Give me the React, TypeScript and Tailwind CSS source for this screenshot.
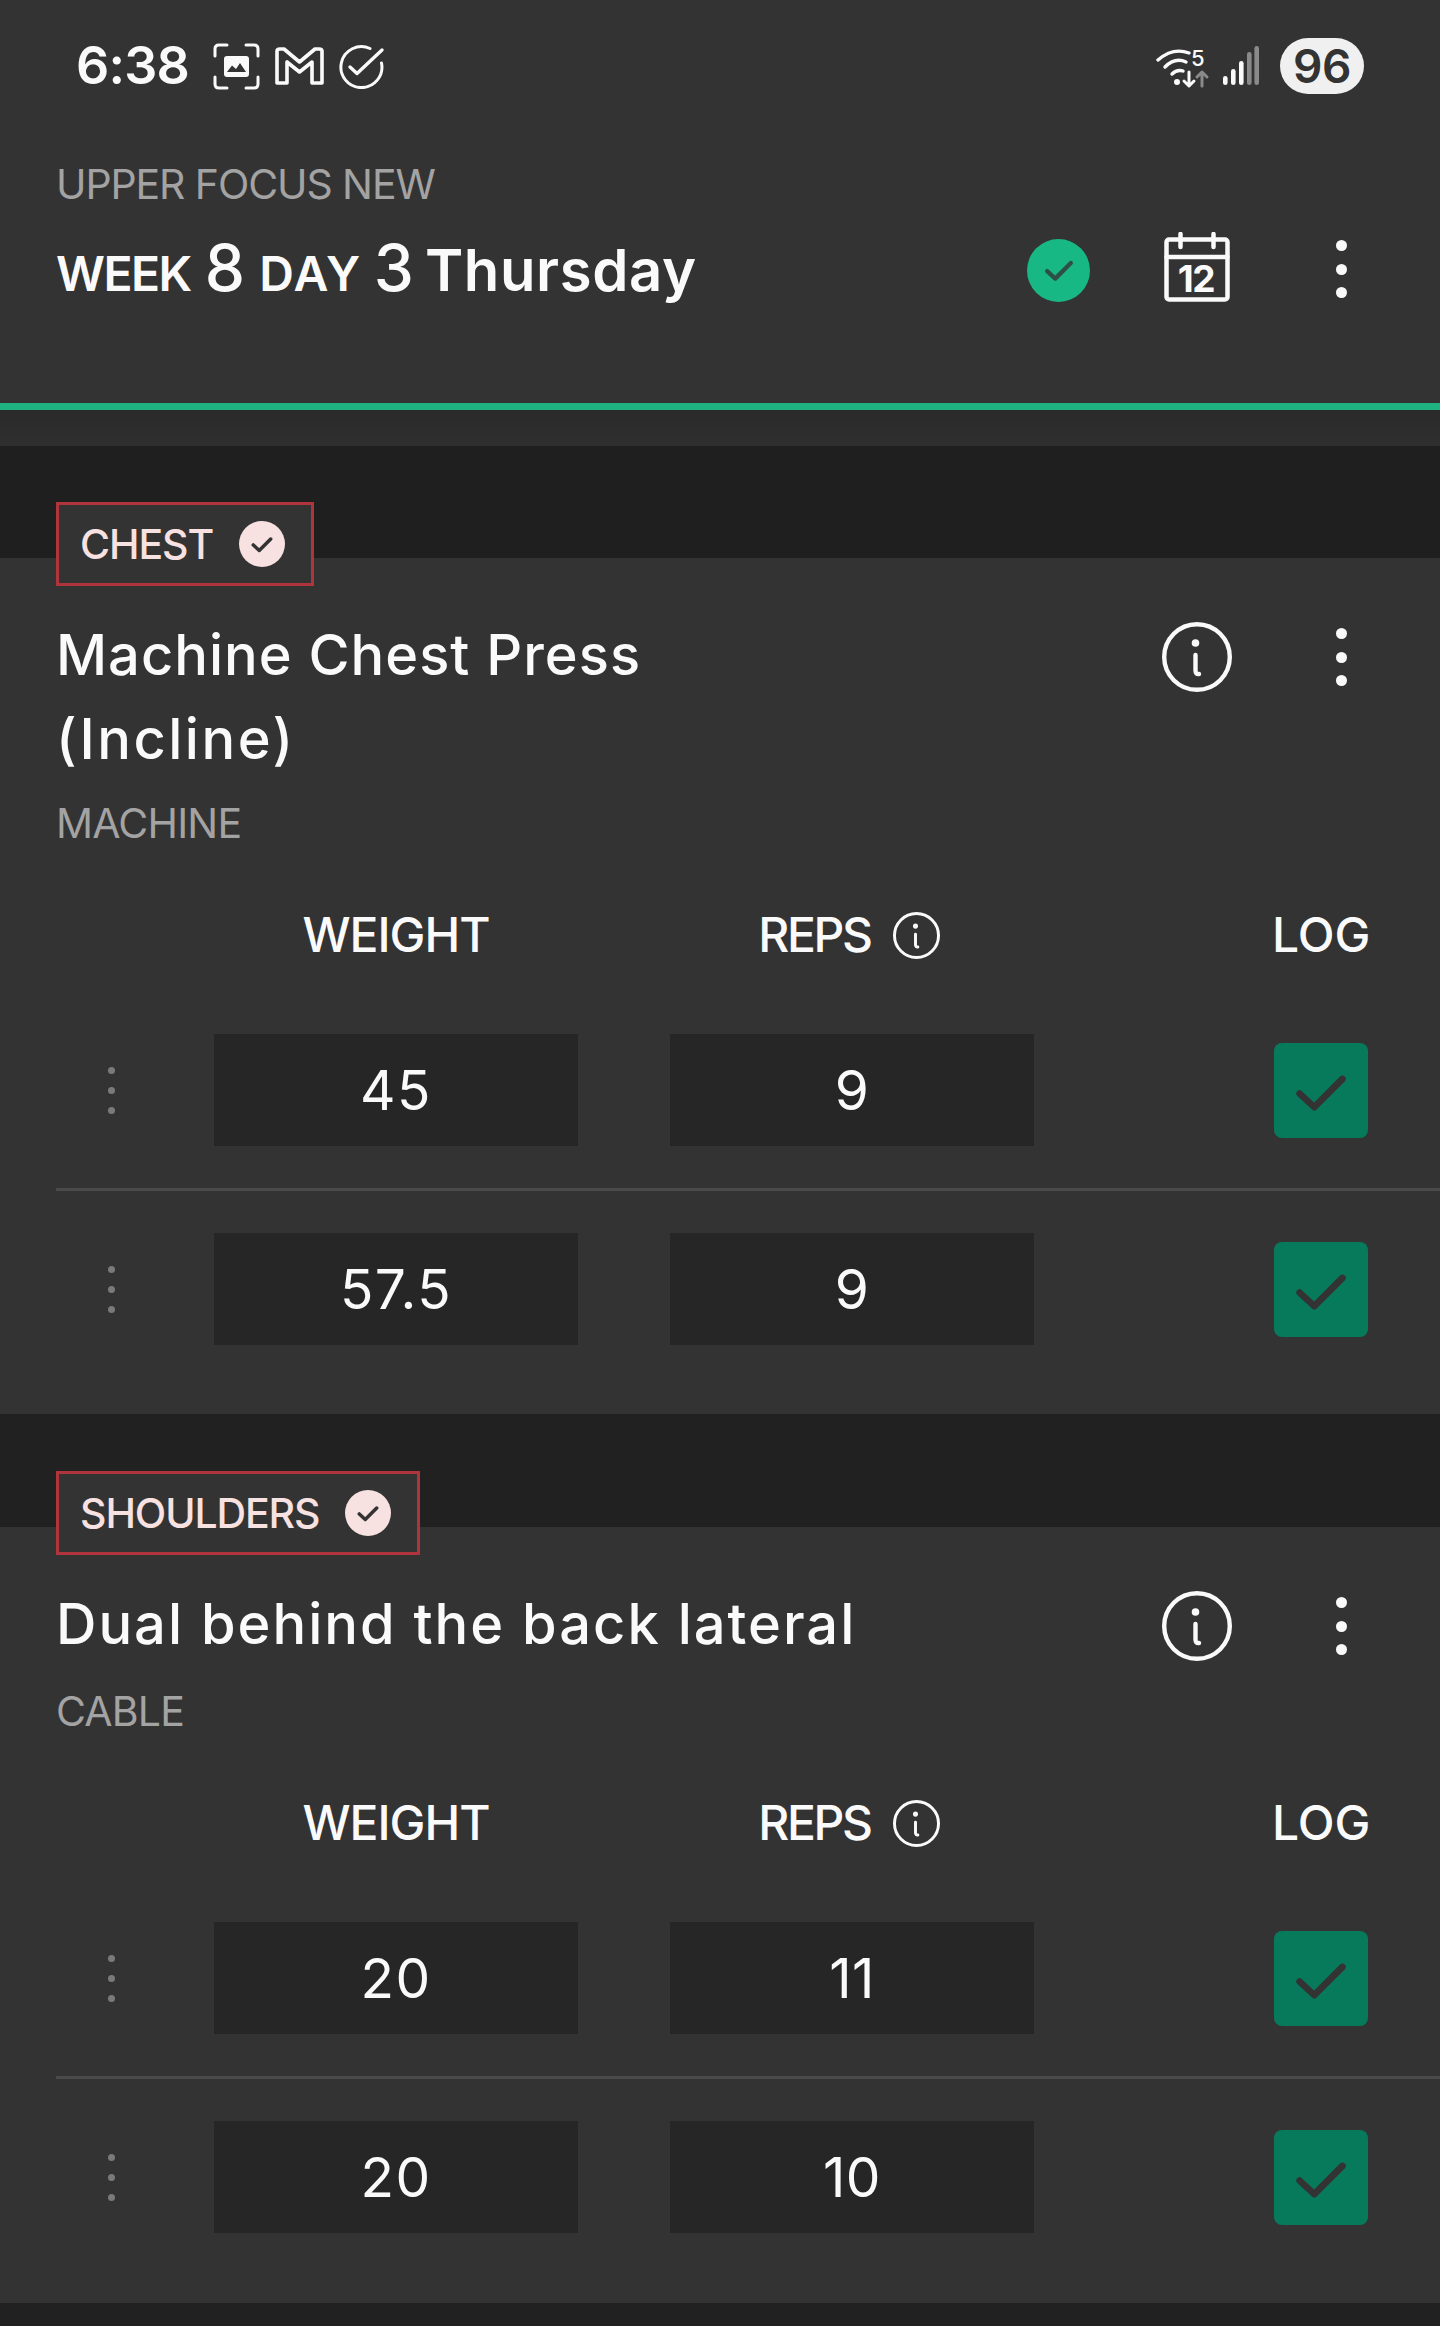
import React from "react";

const Dots = ({ cls }: { cls: string }) => (
  <div className="flex flex-col gap-[12.5px] items-center w-[11px]">
    <span className={cls} />
    <span className={cls} />
    <span className={cls} />
  </div>
);

const Check = ({ w, h, color, sw }: { w: number; h: number; color: string; sw: number }) => (
  <svg width={w} height={h} viewBox="0 0 24 18" fill="none" stroke={color} strokeWidth={sw} strokeLinecap="round" strokeLinejoin="round">
    <path d="M2.5 9.5 L9 15.5 L21.5 3" />
  </svg>
);

const Info = ({ size, sw }: { size: number; sw: number }) => (
  <svg width={size} height={size} viewBox="0 0 70 70" fill="none" stroke="#fafafa" strokeWidth={sw} strokeLinecap="round">
    <circle cx="35" cy="35" r={35 - sw / 2} />
    <circle cx="33.5" cy="21" r="3.8" fill="#fafafa" stroke="none" />
    <path d="M33.5 33 V48.5 Q33.5 52.5 37 52" />
  </svg>
);

const StatusLeftIcons = () => (
  <div className="flex items-center ml-[24px] gap-[15px]">
    <svg width="47" height="47" viewBox="0 0 47 47" fill="none" stroke="#fafafa" strokeWidth="3" strokeLinecap="round">
      <path d="M2 13 V6 Q2 2 6 2 H14 M33 2 H41 Q45 2 45 6 V13 M2 34 V41 Q2 45 6 45 H14 M33 45 H41 Q45 45 45 41 V34" />
      <rect x="11" y="13" width="25" height="21" rx="3" fill="#fafafa" stroke="none" />
      <path d="M14 29 L19 22.5 L23 26 L27 20 L33 29 Z" fill="#333333" stroke="none" />
    </svg>
    <svg width="49" height="38" viewBox="0 0 49 38" fill="none" stroke="#fafafa" strokeWidth="3.6" strokeLinejoin="round">
      <path d="M2 4 Q2 2 5 2 H9 L24.5 15 L40 2 H44 Q47 2 47 4 V36 H37 V15 L24.5 25 L12 15 V36 H2 Z" />
    </svg>
    <svg width="46" height="45" viewBox="0 0 46 45" fill="none" stroke="#fafafa" strokeWidth="3" strokeLinecap="round" strokeLinejoin="round">
      <path d="M31 4.5 A20.5 20.5 0 1 0 42.5 19" />
      <path d="M11 23 L18 29.5 L43 6" strokeWidth="3.4" />
    </svg>
  </div>
);

const StatusRightIcons = () => (
  <div className="flex items-center">
    <svg width="56" height="52" viewBox="0 -8 56 52" fill="none" className="mr-[11px]">
      <g stroke="#fafafa" strokeWidth="3.4" strokeLinecap="round">
        <path d="M2 12 Q17 -1 33 5" />
        <path d="M9 19 Q19 9 30 14" />
        <path d="M16 26 Q21 21 27 23" />
      </g>
      <circle cx="21" cy="34" r="3" fill="#fafafa" />
      <path d="M33 24 V37 M28 33 L33 38 L38 33" stroke="#fafafa" strokeWidth="3" strokeLinecap="round" strokeLinejoin="round" />
      <path d="M46 38 V24 M41 29 L46 24 L51 29" stroke="#8a8a8a" strokeWidth="3" strokeLinecap="round" strokeLinejoin="round" />
      <text x="35" y="18" fill="#fafafa" fontFamily="Inter, sans-serif" fontSize="22" fontWeight="500">5</text>
    </svg>
    <svg width="36" height="40" viewBox="0 0 36 40" className="mr-[21px]">
      <rect x="0" y="30" width="4.6" height="9" rx="2.3" fill="#fafafa" />
      <rect x="8" y="23" width="4.6" height="16" rx="2.3" fill="#fafafa" />
      <rect x="16" y="15" width="4.6" height="24" rx="2.3" fill="#fafafa" />
      <rect x="24" y="6" width="4.6" height="33" rx="2.3" fill="#8a8a8a" />
      <rect x="31.4" y="0" width="4.6" height="39" rx="2.3" fill="#8a8a8a" />
    </svg>
    <div className="w-[84px] h-[56px] rounded-full bg-[#f0f0f0] flex items-center justify-center text-[#333333] text-[46px] font-semibold leading-none tracking-[-0.5px]">
      96
    </div>
  </div>
);

const Calendar = () => (
  <svg width="66" height="70" viewBox="0 0 66 70" fill="none" stroke="#fafafa" strokeWidth="4.5" strokeLinecap="round" strokeLinejoin="round">
    <rect x="2.5" y="7.5" width="61" height="60" rx="2.5" />
    <path d="M2.5 25 H63.5" />
    <path d="M16.5 2 V15 M49.5 2 V15" />
    <text x="32" y="60" fill="#fafafa" stroke="none" textAnchor="middle" fontFamily="Inter, sans-serif" fontSize="37" fontWeight="700" letterSpacing="-1.5">12</text>
  </svg>
);

const Chip = ({ label, w }: { label: string; w: string }) => (
  <div className={`relative z-10 h-[84px] ${w} -mt-[56px] border-[3px] border-[#b0343b] bg-[#333333] flex items-center justify-between pl-[21px] pr-[26px]`}>
    <span className="text-[#f7e1e1] text-[41px] font-medium leading-none tracking-[-1.1px]">{label}</span>
    <span className="w-[46px] h-[46px] rounded-full bg-[#f7e1e1] flex items-center justify-center">
      <Check w={22} h={17} color="#333333" sw={3.8} />
    </span>
  </div>
);

const Row = ({ weight, reps, divider }: { weight: string; reps: string; divider?: boolean }) => (
  <div className={divider ? "border-b-[3px] border-[#4a4a4a] pb-[42px] mb-[42px]" : ""}>
    <div className="flex items-center h-[112px]">
      <div className="w-[158px] pl-[50px]">
        <div className="flex flex-col gap-[13px] w-[11px] items-center">
          <span className="w-[7px] h-[7px] rounded-full bg-[#7a7a7a]" />
          <span className="w-[7px] h-[7px] rounded-full bg-[#7a7a7a]" />
          <span className="w-[7px] h-[7px] rounded-full bg-[#7a7a7a]" />
        </div>
      </div>
      <div className="w-[364px] h-[112px] bg-[#262626] flex items-center justify-center text-[55px] text-[#fafafa] leading-none tracking-[1.5px]">{weight}</div>
      <div className="w-[92px]" />
      <div className="w-[364px] h-[112px] bg-[#262626] flex items-center justify-center text-[55px] text-[#fafafa] leading-none tracking-[0.5px]">{reps}</div>
      <div className="w-[240px]" />
      <div className="w-[94px] h-[95px] rounded-[8px] bg-[#077a5c] flex items-center justify-center">
        <span className="mt-[4px]">
          <Check w={54} h={41} color="#333333" sw={3} />
        </span>
      </div>
    </div>
  </div>
);

const Card = ({
  title,
  kind,
  rows,
  kindCls,
}: {
  title: { text: string; cls: string }[];
  kind: string;
  rows: { w: string; r: string }[];
  kindCls: string;
}) => (
  <div className="pl-[56px]">
    <div className="flex justify-between pt-[36px] pr-[93px]">
      <div className="text-[#fafafa] text-[56px] font-medium leading-[84px] -mt-[9px]">
        {title.map((t) => (
          <div key={t.text} className={t.cls}>
            {t.text}
          </div>
        ))}
      </div>
      <div className="flex items-center h-[70px] gap-[104px]">
        <Info size={70} sw={4.4} />
        <Dots cls="w-[11px] h-[11px] rounded-full bg-[#fafafa]" />
      </div>
    </div>
    <div className={`text-[#a3a3a3] text-[41px] leading-[50px] tracking-[-0.8px] ${kindCls}`}>{kind}</div>
    <div className="flex items-center h-[60px] mt-[57px] text-[#fafafa] text-[48px] font-medium leading-none">
      <div className="w-[158px]" />
      <div className="w-[364px] text-center tracking-[-1px]">WEIGHT</div>
      <div className="w-[92px]" />
      <div className="w-[364px] flex items-center justify-center gap-[22px] pr-[6px]">
        <span className="tracking-[-2.4px]">REPS</span>
        <Info size={47} sw={4.4} />
      </div>
      <div className="w-[238px]" />
      <div>LOG</div>
    </div>
    <div className="mt-[69px]">
      {rows.map((r, i) => (
        <Row key={i} weight={r.w} reps={r.r} divider={i < rows.length - 1} />
      ))}
    </div>
  </div>
);

export default function App() {
  return (
    <div className="w-[1440px] h-[2326px] overflow-hidden bg-[#212121] font-['Inter',sans-serif]">
      <header className="h-[410px] bg-[#333333] border-b-[7px] border-[#1fb382] flex flex-col">
        <div className="flex items-center justify-between pl-[76px] pr-[76px] pt-[38px] h-[94px]">
          <div className="flex items-center">
            <span className="text-[#fafafa] text-[52px] font-semibold leading-none tracking-[-0.8px]">6:38</span>
            <StatusLeftIcons />
          </div>
          <StatusRightIcons />
        </div>
        <div className="flex justify-between pl-[56px] pr-[93px] pt-[65px]">
          <div>
            <div className="text-[#a3a3a3] text-[41px] leading-[50px] tracking-[-1.1px]">UPPER FOCUS NEW</div>
            <div className="flex items-baseline text-[#fafafa] font-semibold leading-none mt-[27px] text-[48px]">
              <span className="tracking-[-1.5px]">WEEK</span>
              <span className="text-[64px] font-medium ml-[14px]">8</span>
              <span className="ml-[14px] tracking-[1.5px]">DAY</span>
              <span className="text-[64px] font-medium ml-[12px]">3</span>
              <span className="text-[58px] ml-[11px] tracking-[0.6px]">Thursday</span>
            </div>
          </div>
          <div className="flex items-center h-[70px] mt-[75px]">
            <span className="w-[63px] h-[63px] rounded-full bg-[#17b883] flex items-center justify-center mr-[74px] mt-[3px]">
              <Check w={30} h={23} color="#2f4f45" sw={3.4} />
            </span>
            <span className="mr-[106px] -mt-[4px]">
              <Calendar />
            </span>
            <Dots cls="w-[11px] h-[11px] rounded-full bg-[#fafafa]" />
          </div>
        </div>
      </header>
      <div className="h-[36px] bg-gradient-to-b from-[#2a2a2a] to-[#2f2f2f]" />
      <div className="h-[112px] bg-[#1f1f1f]" />
      <section className="bg-[#333333] h-[856px] flow-root">
        <div className="pl-[56px]">
          <Chip label="CHEST" w="w-[258px]" />
        </div>
        <Card
          title={[
            { text: "Machine Chest Press", cls: "tracking-[1px]" },
            { text: "(Incline)", cls: "tracking-[2.5px]" },
          ]}
          kind="MACHINE"
          kindCls="mt-[17px]"
          rows={[
            { w: "45", r: "9" },
            { w: "57.5", r: "9" },
          ]}
        />
      </section>
      <div className="h-[113px] bg-[#212121]" />
      <section className="bg-[#333333] h-[776px] flow-root">
        <div className="pl-[56px]">
          <Chip label="SHOULDERS" w="w-[364px]" />
        </div>
        <Card
          title={[{ text: "Dual behind the back lateral", cls: "tracking-[2px]" }]}
          kind="CABLE"
          kindCls="mt-[20px]"
          rows={[
            { w: "20", r: "11" },
            { w: "20", r: "10" },
          ]}
        />
      </section>
    </div>
  );
}
